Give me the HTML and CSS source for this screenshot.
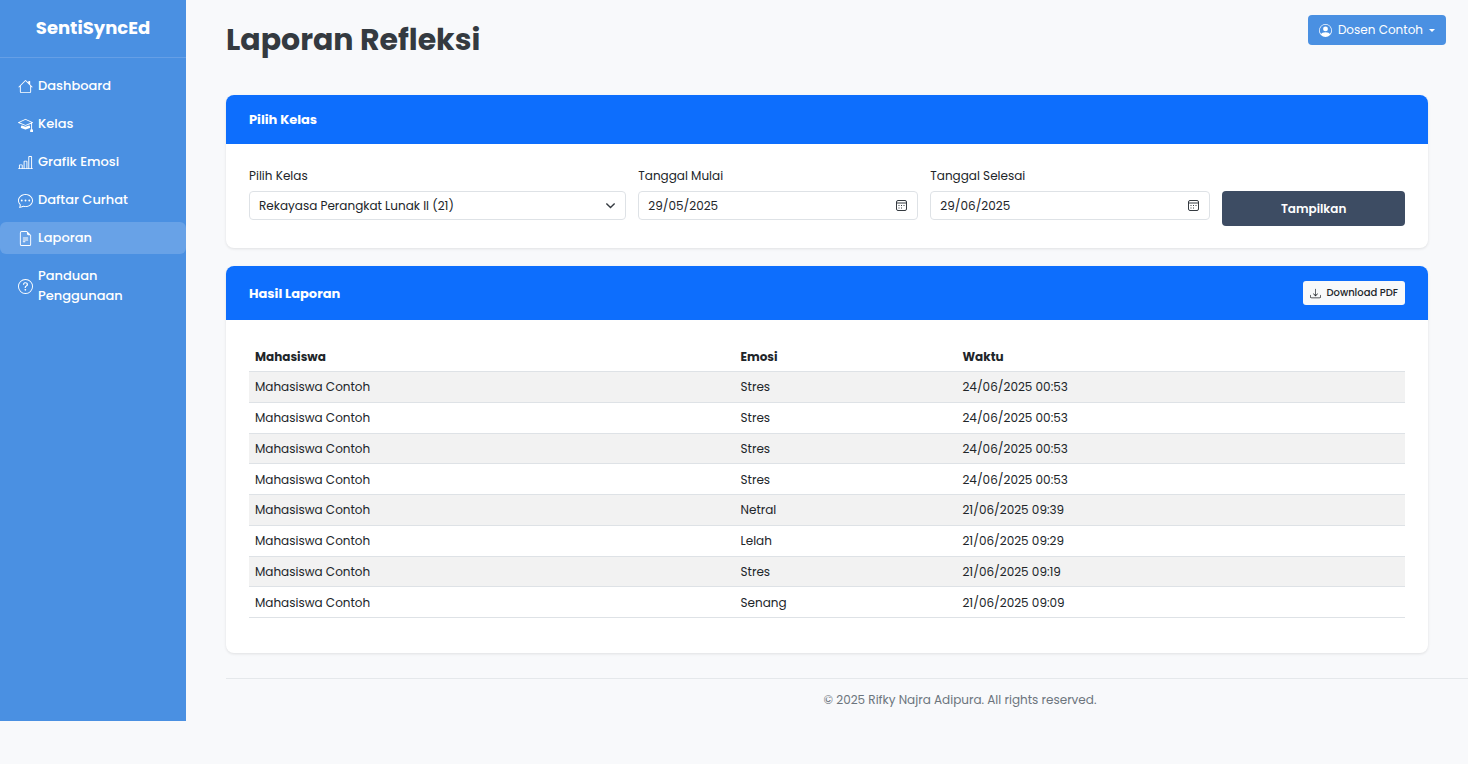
FILE: index.html
```html
<!DOCTYPE html>
<html lang="id">
<head>
<meta charset="utf-8">
<meta name="viewport" content="width=device-width, initial-scale=1">
<title>Laporan Refleksi - SentiSyncEd</title>
<link rel="stylesheet" href="styles.css">
</head>
<body>
<div class="layout">
  <aside class="sidebar">
    <div class="brand">SentiSyncEd</div>
    <nav class="menu">
      <a class="menu-link" href="#"><svg class="icon" viewBox="0 0 16 16"><path d="M8.707 1.5a1 1 0 0 0-1.414 0L.646 8.146a.5.5 0 0 0 .708.708L2 8.207V13.5A1.5 1.5 0 0 0 3.5 15h9a1.5 1.5 0 0 0 1.5-1.5V8.207l.646.647a.5.5 0 0 0 .708-.708L13 5.793V2.5a.5.5 0 0 0-.5-.5h-1a.5.5 0 0 0-.5.5v1.293zM13 7.207V13.5a.5.5 0 0 1-.5.5h-9a.5.5 0 0 1-.5-.5V7.207l5-5z"/></svg>Dashboard</a>
      <a class="menu-link" href="#"><svg class="icon" viewBox="0 0 16 16"><path d="M8.211 2.047a.5.5 0 0 0-.422 0l-7.5 3.5a.5.5 0 0 0 .025.917l7.5 3a.5.5 0 0 0 .372 0L14 7.14V13a1 1 0 0 0-1 1v2h3v-2a1 1 0 0 0-1-1V6.739l.686-.275a.5.5 0 0 0 .025-.917zM8 8.46 1.758 5.965 8 3.052l6.242 2.913z"/><path d="M4.176 9.032a.5.5 0 0 0-.656.327l-.5 1.7a.5.5 0 0 0 .294.605l4.5 1.8a.5.5 0 0 0 .372 0l4.5-1.8a.5.5 0 0 0 .294-.605l-.5-1.7a.5.5 0 0 0-.656-.327L8 10.466z"/></svg>Kelas</a>
      <a class="menu-link" href="#"><svg class="icon" viewBox="0 0 16 16"><path d="M11 2a1 1 0 0 1 1-1h2a1 1 0 0 1 1 1v12h.5a.5.5 0 0 1 0 1H.5a.5.5 0 0 1 0-1H1v-3a1 1 0 0 1 1-1h2a1 1 0 0 1 1 1v3h1V7a1 1 0 0 1 1-1h2a1 1 0 0 1 1 1v7h1zm1 12h2V2h-2zm-3 0V7H7v7zm-5 0v-3H2v3z"/></svg>Grafik Emosi</a>
      <a class="menu-link" href="#"><svg class="icon" viewBox="0 0 16 16"><path d="M5 8a1 1 0 1 1-2 0 1 1 0 0 1 2 0m4 0a1 1 0 1 1-2 0 1 1 0 0 1 2 0m3 1a1 1 0 1 0 0-2 1 1 0 0 0 0 2"/><path d="m2.165 15.803.02-.004c1.83-.363 2.948-.842 3.468-1.105A9 9 0 0 0 8 15c4.418 0 8-3.134 8-7s-3.582-7-8-7-8 3.134-8 7c0 1.76.743 3.37 1.97 4.6a10.4 10.4 0 0 1-.524 2.318l-.003.011a11 11 0 0 1-.244.637c-.079.186.074.394.273.362a22 22 0 0 0 .693-.125m.8-3.108a1 1 0 0 0-.287-.801C1.618 10.83 1 9.468 1 8c0-3.192 3.004-6 7-6s7 2.808 7 6-3.004 6-7 6a8 8 0 0 1-2.088-.272 1 1 0 0 0-.711.074c-.387.196-1.24.57-2.634.893a11 11 0 0 0 .398-2"/></svg>Daftar Curhat</a>
      <a class="menu-link active" href="#" aria-current="page"><svg class="icon" viewBox="0 0 16 16"><path d="M5.5 7a.5.5 0 0 0 0 1h5a.5.5 0 0 0 0-1zM5 9.500a.5.5 0 0 1 .5-.5h5a.5.5 0 0 1 0 1h-5a.5.5 0 0 1-.5-.5m0 2a.5.5 0 0 1 .5-.5h2a.5.5 0 0 1 0 1h-2a.5.5 0 0 1-.5-.5"/><path d="M9.500 0H4a2 2 0 0 0-2 2v12a2 2 0 0 0 2 2h8a2 2 0 0 0 2-2V4.500zm0 1v2A1.500 1.500 0 0 0 11 4.500h2V14a1 1 0 0 1-1 1H4a1 1 0 0 1-1-1V2a1 1 0 0 1 1-1z"/></svg>Laporan</a>
      <a class="menu-link" href="#"><svg class="icon" viewBox="0 0 16 16"><path d="M8 15A7 7 0 1 1 8 1a7 7 0 0 1 0 14m0 1A8 8 0 1 0 8 0a8 8 0 0 0 0 16"/><path d="M5.255 5.786a.237.237 0 0 0 .241.247h.825c.138 0 .248-.113.266-.25.09-.656.54-1.134 1.342-1.134.686 0 1.314.343 1.314 1.168 0 .635-.374.927-.965 1.371-.673.489-1.206 1.060-1.168 1.987l.003.217a.25.25 0 0 0 .25.246h.811a.25.25 0 0 0 .25-.25v-.105c0-.718.273-.927 1.010-1.486.609-.463 1.244-.977 1.244-2.056 0-1.511-1.276-2.241-2.673-2.241-1.267 0-2.655.590-2.750 2.286m1.557 5.763c0 .533.425.927 1.010.927.609 0 1.028-.394 1.028-.927 0-.552-.420-.940-1.029-.940-.584 0-1.009.388-1.009.940"/></svg>Panduan Penggunaan</a>
    </nav>
  </aside>

  <div class="page">
    <main class="content">
      <header class="topbar">
        <h1 class="page-title">Laporan Refleksi</h1>
        <button class="user-button" type="button"><svg class="icon" viewBox="0 0 16 16"><path d="M11 6a3 3 0 1 1-6 0 3 3 0 0 1 6 0"/><path fill-rule="evenodd" d="M0 8a8 8 0 1 1 16 0A8 8 0 0 1 0 8m8-7a7 7 0 0 0-5.468 11.370C3.242 11.226 4.805 10 8 10s4.757 1.225 5.468 2.370A7 7 0 0 0 8 1"/></svg>Dosen Contoh<span class="caret"></span></button>
      </header>

      <section class="card">
        <div class="card-header"><h2 class="card-title">Pilih Kelas</h2></div>
        <form class="filter">
          <div class="field field-class">
            <label for="kelas">Pilih Kelas</label>
            <div class="control-wrap">
              <select class="control" id="kelas"><option>Rekayasa Perangkat Lunak II (21)</option></select>
              <svg class="chevron" viewBox="0 0 16 16"><path d="m2 5 6 6 6-6"/></svg>
            </div>
          </div>
          <div class="field">
            <label for="mulai">Tanggal Mulai</label>
            <div class="control-wrap">
              <input class="control" id="mulai" type="text" value="29/05/2025">
              <svg class="calendar" viewBox="0 0 13 13"><rect x="1.500" y="1.500" width="10" height="10" rx="1.500"/><path d="M1.500 4h10"/><path class="dots" d="M6 6.500h1M8.500 6.500h1M3.500 9h1M6 9h1M3.500 6.500h1"/></svg>
            </div>
          </div>
          <div class="field">
            <label for="selesai">Tanggal Selesai</label>
            <div class="control-wrap">
              <input class="control" id="selesai" type="text" value="29/06/2025">
              <svg class="calendar" viewBox="0 0 13 13"><rect x="1.500" y="1.500" width="10" height="10" rx="1.500"/><path d="M1.500 4h10"/><path class="dots" d="M6 6.500h1M8.500 6.500h1M3.500 9h1M6 9h1M3.500 6.500h1"/></svg>
            </div>
          </div>
          <button class="submit" type="button">Tampilkan</button>
        </form>
      </section>

      <section class="card">
        <div class="card-header">
          <h2 class="card-title">Hasil Laporan</h2>
          <button class="download" type="button"><svg class="icon" viewBox="0 0 16 16"><path d="M.5 9.900a.5.5 0 0 1 .5.5v2.500a1 1 0 0 0 1 1h12a1 1 0 0 0 1-1v-2.500a.5.5 0 0 1 1 0v2.500a2 2 0 0 1-2 2H2a2 2 0 0 1-2-2v-2.500a.5.5 0 0 1 .5-.5"/><path d="M7.646 11.854a.5.5 0 0 0 .708 0l3-3a.5.5 0 0 0-.708-.708L8.500 10.293V1.500a.5.5 0 0 0-1 0v8.793L5.354 8.146a.5.5 0 1 0-.708.708z"/></svg>Download PDF</button>
        </div>
        <div class="report">
          <table class="table">
            <thead><tr><th class="col-name">Mahasiswa</th><th class="col-mood">Emosi</th><th>Waktu</th></tr></thead>
            <tbody>
              <tr><td>Mahasiswa Contoh</td><td>Stres</td><td>24/06/2025 00:53</td></tr>
              <tr><td>Mahasiswa Contoh</td><td>Stres</td><td>24/06/2025 00:53</td></tr>
              <tr><td>Mahasiswa Contoh</td><td>Stres</td><td>24/06/2025 00:53</td></tr>
              <tr><td>Mahasiswa Contoh</td><td>Stres</td><td>24/06/2025 00:53</td></tr>
              <tr><td>Mahasiswa Contoh</td><td>Netral</td><td>21/06/2025 09:39</td></tr>
              <tr><td>Mahasiswa Contoh</td><td>Lelah</td><td>21/06/2025 09:29</td></tr>
              <tr><td>Mahasiswa Contoh</td><td>Stres</td><td>21/06/2025 09:19</td></tr>
              <tr><td>Mahasiswa Contoh</td><td>Senang</td><td>21/06/2025 09:09</td></tr>
            </tbody>
          </table>
        </div>
      </section>
    </main>
    <footer class="footer">© 2025 Rifky Najra Adipura. All rights reserved.</footer>
  </div>
</div>
</body>
</html>
```
FILE: styles.css
```css
* {
  box-sizing: border-box;
}

body {
  margin: 0;
  background: #f8f9fb;
  color: #212529;
  font: 12px/20px Poppins, Inter, "Open Sans", sans-serif;
}

button,
input,
select {
  font: inherit;
  color: inherit;
}

h1,
h2 {
  margin: 0;
}

.layout {
  display: flex;
}

.icon {
  flex: none;
  width: 15px;
  height: 15px;
  fill: currentColor;
}

.sidebar {
  flex: 0 0 186px;
  background: #4a90e2;
  color: #fff;
}

.brand {
  padding: 14px 0 15px;
  border-bottom: 1px solid #659fe6;
  font-size: 18px;
  font-weight: 700;
  line-height: 28px;
  text-align: center;
}

.menu {
  display: grid;
  gap: 6px;
  padding-top: 12px;
}

.menu-link {
  display: flex;
  align-items: center;
  gap: 5px;
  padding: 6px 40px 6px 18px;
  border-radius: 6px;
  color: #fff;
  font-size: 13px;
  font-weight: 500;
  text-decoration: none;
}

.menu-link.active {
  background: #68a2e7;
}

.page {
  flex: 1;
  min-width: 0;
}

.content {
  display: grid;
  gap: 18px;
  padding: 15px 40px 0;
}

.topbar {
  display: flex;
  align-items: flex-start;
  justify-content: space-between;
  margin-right: -18px;
  padding-bottom: 12px;
}

.page-title {
  color: #343a40;
  font-size: 30px;
  font-weight: 700;
  line-height: 50px;
}

.user-button {
  display: flex;
  align-items: center;
  gap: 6px;
  padding: 5px 11px;
  border: 0;
  border-radius: 4px;
  background: #4a90e2;
  color: #fff;
}

.user-button .icon {
  width: 13px;
  height: 13px;
}

.caret {
  border: 3px solid transparent;
  border-top-color: currentColor;
  border-bottom: 0;
}

.card {
  overflow: hidden;
  border-radius: 8px;
  background: #fff;
  box-shadow: 0 1px 3px rgba(0, 0, 0, 0.1);
}

.card-header {
  display: flex;
  align-items: center;
  justify-content: space-between;
  padding: 15px 23px;
  background: #0d6efd;
  color: #fff;
}

.card-title {
  font-size: 13px;
  font-weight: 700;
  line-height: 19px;
}

.filter {
  display: grid;
  grid-template-columns: repeat(12, 1fr);
  gap: 12px;
  padding: 22px 23px;
}

.field {
  display: grid;
  grid-column: span 3;
  align-content: start;
  gap: 5px;
}

.field-class {
  grid-column: span 4;
}

.control-wrap {
  display: grid;
  align-items: center;
}

.control-wrap > * {
  grid-area: 1 / 1;
}

.control {
  width: 100%;
  height: 29px;
  padding: 0 9px;
  border: 1px solid #dee2e6;
  border-radius: 4px;
  background: #fff;
  appearance: none;
}

.chevron,
.calendar {
  justify-self: end;
  margin-right: 10px;
  fill: none;
  stroke: #343a40;
  pointer-events: none;
}

.chevron {
  width: 11px;
  stroke-width: 2;
}

.calendar {
  width: 13px;
}

.submit {
  grid-column: span 2;
  align-self: end;
  height: 35px;
  margin-top: 25px;
  border: 0;
  border-radius: 4px;
  background: #3d4c63;
  color: #fff;
  font-weight: 600;
}

.download {
  display: flex;
  align-items: center;
  gap: 5px;
  padding: 2px 7px;
  border: 0;
  border-radius: 3px;
  background: #f8f9fa;
  color: #212529;
  font-size: 10px;
  font-weight: 500;
}

.download .icon {
  width: 11px;
  height: 11px;
}

.report {
  padding: 22px 23px 35px;
}

.table {
  width: 100%;
  height: 276px;
  border-collapse: collapse;
  table-layout: fixed;
  line-height: 19px;
}

.table th,
.table td {
  padding: 5px 6px;
  border-bottom: 1px solid #dee2e6;
  text-align: left;
}

.table tbody tr:nth-child(odd) {
  background: #f2f2f2;
}

.col-name {
  width: 42%;
}

.col-mood {
  width: 19.2%;
}

.footer {
  margin: 25px 0 0 40px;
  padding: 11px 0 11px 226px;
  border-top: 1px solid #e5e8eb;
  color: #6c757d;
  text-align: center;
}
```
